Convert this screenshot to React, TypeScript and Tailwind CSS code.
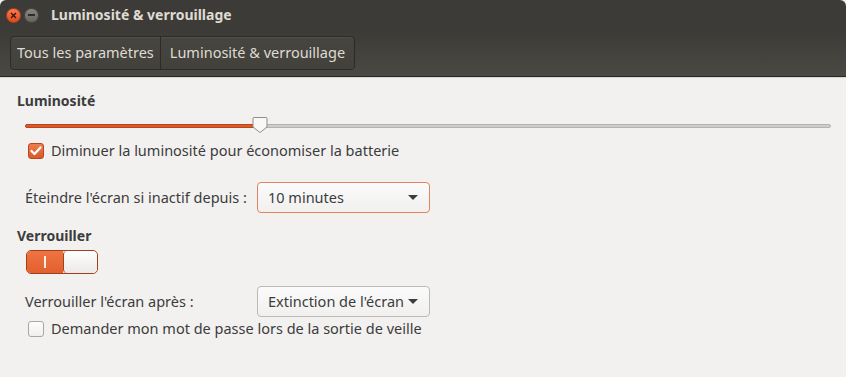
const font = { fontFamily: '"Noto Sans", "DejaVu Sans", sans-serif' };

function Caret() {
  return (
    <svg width="10" height="6" viewBox="0 0 10 6" className="shrink-0">
      <path d="M0 0 L10 0 L5 5 Z" fill="#3c3c3c" />
    </svg>
  );
}

function Checkbox({ checked }: { checked: boolean }) {
  if (checked) {
    return (
      <span className="w-[16px] h-[16px] rounded-[3px] bg-gradient-to-b from-[#ef7e4d] to-[#d9582a] border border-[#b8461f] flex items-center justify-center shrink-0">
        <svg width="12" height="10" viewBox="0 0 12 10">
          <path d="M1.5 5 L4.5 8 L10.5 1.5" stroke="#fff" strokeWidth="2.2" fill="none" strokeLinecap="round" strokeLinejoin="round" />
        </svg>
      </span>
    );
  }
  return <span className="w-[16px] h-[16px] rounded-[3px] bg-gradient-to-b from-[#fdfdfd] to-[#f0efee] border border-[#a9a7a3] shrink-0" />;
}

function Dropdown({ label, focused }: { label: string; focused?: boolean }) {
  return (
    <div
      className={`w-[173px] h-[31px] rounded-[4px] border bg-gradient-to-b from-[#fbfbfb] to-[#f1f0ef] flex items-center justify-between pl-[10px] pr-[11px] text-[14.5px] text-[#3c3c3c] ${
        focused ? 'border-[#e0855e]' : 'border-[#bcbab6]'
      }`}
    >
      <span>{label}</span>
      <Caret />
    </div>
  );
}

export default function App() {
  return (
    <div className="w-[846px] h-[377px] bg-[#f2f1f0] overflow-hidden flex flex-col" style={font}>
      {/* title bar */}
      <div className="h-[30px] bg-[#3c3b37] flex items-center rounded-t-[6px]">
        <div className="flex items-center gap-[3px] pl-[6px]">
          <span className="w-[15px] h-[15px] rounded-full bg-gradient-to-b from-[#f37b52] to-[#df4a1e] border border-[#b83d16] flex items-center justify-center">
            <svg width="7" height="7" viewBox="0 0 7 7">
              <path d="M1 1 L6 6 M6 1 L1 6" stroke="#3a1508" strokeWidth="1.3" />
            </svg>
          </span>
          <span className="w-[15px] h-[15px] rounded-full bg-gradient-to-b from-[#88877f] to-[#66655f] border border-[#4a4944] flex items-center justify-center">
            <span className="w-[7px] h-[1.5px] bg-[#2e2d2a]" />
          </span>
        </div>
        <span className="ml-[12px] text-[14px] font-bold text-[#dfdbd2] leading-none">Luminosité &amp; verrouillage</span>
      </div>
      {/* toolbar */}
      <div className="h-[47px] bg-gradient-to-b from-[#3c3b37] to-[#4b4943] flex items-center pl-[10px] border-b border-[#2a2926]">
        <div className="h-[34px] flex rounded-[4px] border border-[#2c2b28] bg-gradient-to-b from-[#474540] to-[#43413c] shadow-[inset_0_1px_0_rgba(255,255,255,0.06)] text-[14.5px] text-[#dfdbd2]">
          <span className="px-[6px] flex items-center border-r border-[#2c2b28]">Tous les paramètres</span>
          <span className="px-[9px] flex items-center">Luminosité &amp; verrouillage</span>
        </div>
      </div>
      <div className="h-[1px] bg-[#d9d7d3]" />
      {/* content */}
      <div className="flex flex-col pl-[17px] pt-[14px] text-[14.5px] text-[#3c3c3c]">
        <div className="font-bold leading-[18px] text-[14px]">Luminosité</div>
        <div className="relative h-[16px] mt-[8px] ml-[8px] w-[806px] flex items-center">
          <div className="absolute left-0 right-0 h-[4px] rounded-full bg-[#cfcdca] border border-[#b5b3af]" />
          <div className="absolute left-0 w-[236px] h-[4px] rounded-full bg-[#dd5a27] border border-[#b8461f]" />
          <svg className="absolute left-[227px] top-[-2px]" width="16" height="18" viewBox="0 0 16 18">
            <path d="M2 1.5 H14 Q15 1.5 15 2.5 V11 L8 16.5 L1 11 V2.5 Q1 1.5 2 1.5 Z" fill="#f8f8f7" stroke="#8f8d89" strokeWidth="1" />
          </svg>
        </div>
        <div className="flex items-center gap-[7px] mt-[8px] ml-[11px] h-[18px]">
          <Checkbox checked />
          <span>Diminuer la luminosité pour économiser la batterie</span>
        </div>
        <div className="flex items-center mt-[22px] ml-[8px]">
          <span className="w-[232px]">Éteindre l'écran si inactif depuis :</span>
          <Dropdown label="10 minutes" focused />
        </div>
        <div className="font-bold leading-[18px] text-[14px] mt-[14px]">Verrouiller</div>
        <div className="mt-[5px] ml-[9px] w-[72px] h-[24px] rounded-[5px] border border-[#a3401a] flex overflow-hidden">
          <div className="w-[36px] bg-gradient-to-b from-[#ee7443] to-[#e2602d] flex items-center justify-center">
            <span className="w-[2px] h-[12px] bg-[#fff3dc]" />
          </div>
          <div className="flex-1 bg-gradient-to-b from-[#ffffff] to-[#ebeae8] rounded-[4px] border-l border-[#a3401a]" />
        </div>
        <div className="flex items-center mt-[12px] ml-[8px]">
          <span className="w-[232px]">Verrouiller l'écran après :</span>
          <Dropdown label="Extinction de l'écran" />
        </div>
        <div className="flex items-center gap-[7px] mt-[3px] ml-[11px] h-[18px]">
          <Checkbox checked={false} />
          <span>Demander mon mot de passe lors de la sortie de veille</span>
        </div>
      </div>
    </div>
  );
}
